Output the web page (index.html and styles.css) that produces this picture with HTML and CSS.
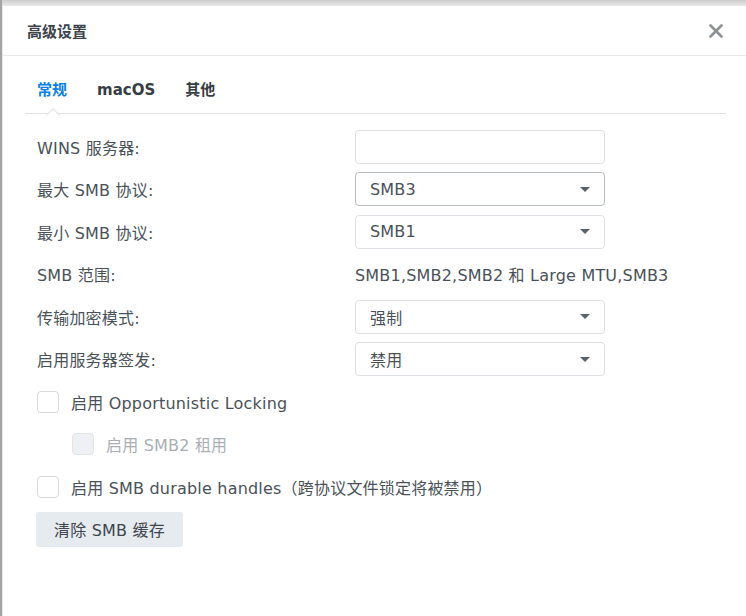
FILE: index.html
```html
<!DOCTYPE html>
<html lang="zh-CN">
<head>
<meta charset="utf-8">
<title>高级设置</title>
<link rel="stylesheet" href="styles.css">
</head>
<body>
<div class="dialog">
  <div class="header">
    <span class="title">高级设置</span>
    <span class="close" aria-label="关闭">
      <svg width="14" height="14" viewBox="0 0 14 14"><path d="M1.5 1.5 L12.5 12.5 M12.5 1.5 L1.5 12.5" stroke="#8c9196" stroke-width="2.6" stroke-linecap="round" fill="none"/></svg>
    </span>
  </div>
  <div class="content">
    <div class="tabs">
      <span class="tab active">常规</span>
      <span class="tab">macOS</span>
      <span class="tab">其他</span>
    </div>
    <div class="form">
      <div class="label">WINS 服务器:</div>
      <div class="input"></div>

      <div class="label">最大 SMB 协议:</div>
      <div class="select hover"><span>SMB3</span><svg class="caret" width="10" height="5" viewBox="0 0 10 5"><path d="M0 0 H10 L5 5 Z" fill="#5a6168"/></svg></div>

      <div class="label">最小 SMB 协议:</div>
      <div class="select"><span>SMB1</span><svg class="caret" width="10" height="5" viewBox="0 0 10 5"><path d="M0 0 H10 L5 5 Z" fill="#5a6168"/></svg></div>

      <div class="label">SMB 范围:</div>
      <div class="value">SMB1,SMB2,SMB2 和 Large MTU,SMB3</div>

      <div class="label">传输加密模式:</div>
      <div class="select"><span>强制</span><svg class="caret" width="10" height="5" viewBox="0 0 10 5"><path d="M0 0 H10 L5 5 Z" fill="#5a6168"/></svg></div>

      <div class="label">启用服务器签发:</div>
      <div class="select"><span>禁用</span><svg class="caret" width="10" height="5" viewBox="0 0 10 5"><path d="M0 0 H10 L5 5 Z" fill="#5a6168"/></svg></div>

      <div class="check-row">
        <span class="checkbox"></span>
        <span class="check-label">启用 Opportunistic Locking</span>
      </div>

      <div class="check-row indent disabled">
        <span class="checkbox"></span>
        <span class="check-label">启用 SMB2 租用</span>
      </div>

      <div class="check-row">
        <span class="checkbox"></span>
        <span class="check-label">启用 SMB durable handles（跨协议文件锁定将被禁用）</span>
      </div>

      <div class="button-row">
        <span class="button">清除 SMB 缓存</span>
      </div>
    </div>
  </div>
</div>
</body>
</html>
```

FILE: styles.css
```css
html, body {
  margin: 0;
  padding: 0;
}

body {
  width: 746px;
  height: 616px;
  overflow: hidden;
  background: linear-gradient(#cdcdcd, #e8e8e8 6px);
  border-left: 2px solid #a3a3a3;
  box-sizing: border-box;
  font-family: "DejaVu Sans", "Noto Sans CJK SC", sans-serif;
  color: #4a5158;
}

.dialog {
  margin-top: 6px;
  margin-left: 1px;
  height: 610px;
  background: #ffffff;
  display: flex;
  flex-direction: column;
}

.header {
  height: 49px;
  border-bottom: 1px solid #e6e8ea;
  display: flex;
  align-items: center;
  justify-content: space-between;
  padding: 0 23px 0 24px;
  flex-shrink: 0;
}

.title {
  font-size: 15px;
  font-weight: 700;
  color: #3d434a;
}

.close {
  display: flex;
  width: 14px;
  height: 14px;
}

.content {
  padding: 0 20px 0 22px;
}

.tabs {
  display: flex;
  align-items: flex-end;
  gap: 30px;
  height: 58px;
  box-sizing: border-box;
  padding-left: 12px;
  border-bottom: 1px solid #e1e4e7;
}

.tab {
  position: relative;
  font-size: 15px;
  font-weight: 700;
  line-height: 22px;
  padding-bottom: 12px;
  color: #373d44;
}

.tab.active {
  color: #0a7fe6;
}

.tab.active::after {
  content: "";
  position: absolute;
  left: 50%;
  bottom: -6.5px;
  width: 9px;
  height: 9px;
  margin-left: -4.5px;
  background: #ffffff;
  border-left: 1px solid #e1e4e7;
  border-top: 1px solid #e1e4e7;
  transform: rotate(45deg);
}

.form {
  display: grid;
  grid-template-columns: 318px 250px;
  grid-auto-rows: 34px;
  row-gap: 8.5px;
  margin-top: 15.5px;
  padding-left: 12px;
  font-size: 16px;
  letter-spacing: 0.2px;
}

.label {
  display: flex;
  align-items: center;
  white-space: nowrap;
}

.value {
  display: flex;
  align-items: center;
  white-space: nowrap;
}

.input,
.select {
  box-sizing: border-box;
  border: 1px solid #dde1e5;
  border-radius: 4px;
  background: #ffffff;
}

.select {
  display: flex;
  align-items: center;
  justify-content: space-between;
  padding: 0 14px 0 14px;
}

.select.hover {
  border-color: #b7bcc1;
}

.caret {
  display: block;
}

.check-row {
  grid-column: 1 / span 2;
  display: flex;
  align-items: center;
  gap: 12px;
  white-space: nowrap;
}

.check-row.indent {
  padding-left: 35px;
}

.checkbox {
  width: 22px;
  height: 22px;
  box-sizing: border-box;
  border: 1px solid #d5dade;
  border-radius: 4px;
  background: #ffffff;
  flex-shrink: 0;
}

.check-row.disabled .checkbox {
  background: #eef1f4;
  border-color: #e1e5e9;
}

.check-row.disabled .check-label {
  color: #a9afb5;
}

.button-row {
  grid-column: 1 / span 2;
  display: flex;
  align-items: center;
}

.button {
  display: flex;
  align-items: center;
  justify-content: center;
  width: 147px;
  height: 35px;
  margin-left: -1px;
  box-sizing: border-box;
  background: #e6ebf0;
  border-radius: 3px;
  color: #3f454c;
  white-space: nowrap;
}
```
